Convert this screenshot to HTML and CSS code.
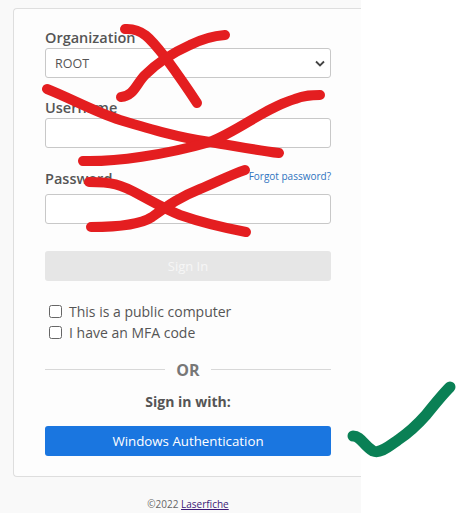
FILE: index.html
```html
<!DOCTYPE html>
<html lang="en">
<head>
    <meta charset="UTF-8">
    <title>Sign In</title>
    <link rel="stylesheet" href="styles.css">
</head>
<body>
    <div class="page">
        <form class="login-card">
            <label class="field-label">Organization</label>
            <div class="select-box">
                <span>ROOT</span>
                <svg class="chevron" width="10" height="7" viewBox="0 0 10 7"><path d="M1 1.5 L5 5.5 L9 1.5" fill="none" stroke="#444" stroke-width="1.8"/></svg>
            </div>

            <label class="field-label username-label">Username</label>
            <div class="text-box"></div>

            <div class="password-row">
                <label class="field-label">Password</label>
                <a class="forgot-link">Forgot password?</a>
            </div>
            <div class="text-box"></div>

            <div class="signin-btn">Sign In</div>

            <div class="checks">
                <div class="check-row"><span class="check-box"></span>This is a public computer</div>
                <div class="check-row"><span class="check-box"></span>I have an MFA code</div>
            </div>

            <div class="or-row"><span class="or-line"></span><span class="or-text">OR</span><span class="or-line"></span></div>
            <div class="signin-with">Sign in with:</div>
            <div class="windows-btn">Windows Authentication</div>
        </form>
        <footer class="footer">©2022 <a class="footer-link">Laserfiche</a></footer>
    </div>

    <!-- pen marks drawn on top of the screenshot -->
    <svg class="ink" width="456" height="513" viewBox="0 0 456 513">
        <g fill="none" stroke-width="10" stroke-linecap="round" stroke-linejoin="round">
            <path stroke="#e41e20" d="M125 29 C142 28 150 38 165 57 C176 72 186 86 197 103"/>
            <path stroke="#e41e20" d="M121 97 C134 96 136 84 145 75 C156 64 170 54 190 45 C202 39 212 36 225 35"/>
            <path stroke="#e41e20" d="M47 89 C70 98 95 112 120 120 C150 129 180 138 210 142 C235 146 255 150 279 153"/>
            <path stroke="#e41e20" d="M83 161 C115 162 165 155 210 142 C240 130 265 108 295 99 C305 95 312 95 320 95"/>
            <path stroke="#e41e20" d="M89 182 C112 182 120 184 140 195 C155 203 165 209 180 215 C200 222 225 228 246 232"/>
            <path stroke="#e41e20" d="M91 227 C115 227 140 225 152 217 C170 204 180 197 200 189 C215 183 230 175 245 170"/>
            <path stroke="#0a8055" stroke-width="11" d="M353 436 C361 436 363 445 373 451 C380 454 388 447 398 440 C410 432 418 424 426 415 C434 405 442 395 450 387"/>
        </g>
    </svg>
</body>
</html>
```

FILE: styles.css
```css
* {
    box-sizing: border-box;
    font-family: 'Open Sans', sans-serif;
}

body {
    margin: 0;
    background: #fff;
    overflow: hidden;
}

.page {
    width: 361px;
    height: 513px;
    padding: 8px 0 0 13px;
    background: #f9f9f9;
}

.login-card {
    height: 469px;
    padding: 19px 30px 0 31px;
    background: #fdfdfd;
    border: 1px solid #dedede;
    border-right: none;
    border-radius: 4px 0 0 4px;
}

.field-label {
    display: block;
    height: 19px;
    margin-bottom: 1px;
    font-size: 14.5px;
    font-weight: 600;
    line-height: 19px;
    color: #555;
}

.select-box,
.text-box {
    display: flex;
    align-items: center;
    justify-content: space-between;
    height: 30px;
    padding: 0 5px 0 9px;
    background: #fff;
    border: 1px solid #c8c8c8;
    border-radius: 3px;
    font-size: 12.5px;
    color: #555;
}

.username-label {
    margin-top: 20px;
}

.password-row {
    display: flex;
    align-items: flex-start;
    justify-content: space-between;
    margin-top: 21px;
    padding-bottom: 5px;
}

.forgot-link {
    margin-top: -2px;
    font-size: 10px;
    line-height: 19px;
    color: #2f74c0;
}

.signin-btn,
.windows-btn {
    height: 30px;
    border-radius: 3px;
    line-height: 30px;
    text-align: center;
    color: #fff;
}

.signin-btn {
    margin-top: 27px;
    font-size: 13px;
    background: #e6e6e6;
    color: #f6f6f6;
}

.checks {
    margin: 20px 0 0 4px;
}

.check-row {
    display: flex;
    align-items: center;
    height: 21px;
    font-size: 14px;
    color: #555;
}

.check-box {
    width: 13px;
    height: 13px;
    margin-right: 7px;
    background: #fff;
    border: 1px solid #666;
    border-radius: 2.5px;
}

.or-row {
    display: flex;
    align-items: center;
    gap: 11px;
    margin-top: 16px;
}

.or-line {
    flex: 1;
    height: 1px;
    margin-bottom: 2px;
    background: #d8d8d8;
}

.or-text {
    font-size: 16px;
    font-weight: 700;
    color: #777;
}

.signin-with {
    margin-top: 11px;
    font-size: 14px;
    font-weight: 700;
    text-align: center;
    color: #555;
}

.windows-btn {
    margin-top: 15px;
    font-size: 13.3px;
    background: #1a76e0;
}

.footer {
    margin: 20px -2px 0 0;
    font-size: 10px;
    text-align: center;
    color: #666;
}

.footer-link {
    color: #3d1a78;
    text-decoration: underline;
}

.ink {
    position: absolute;
    top: 0;
    left: 0;
}
```
